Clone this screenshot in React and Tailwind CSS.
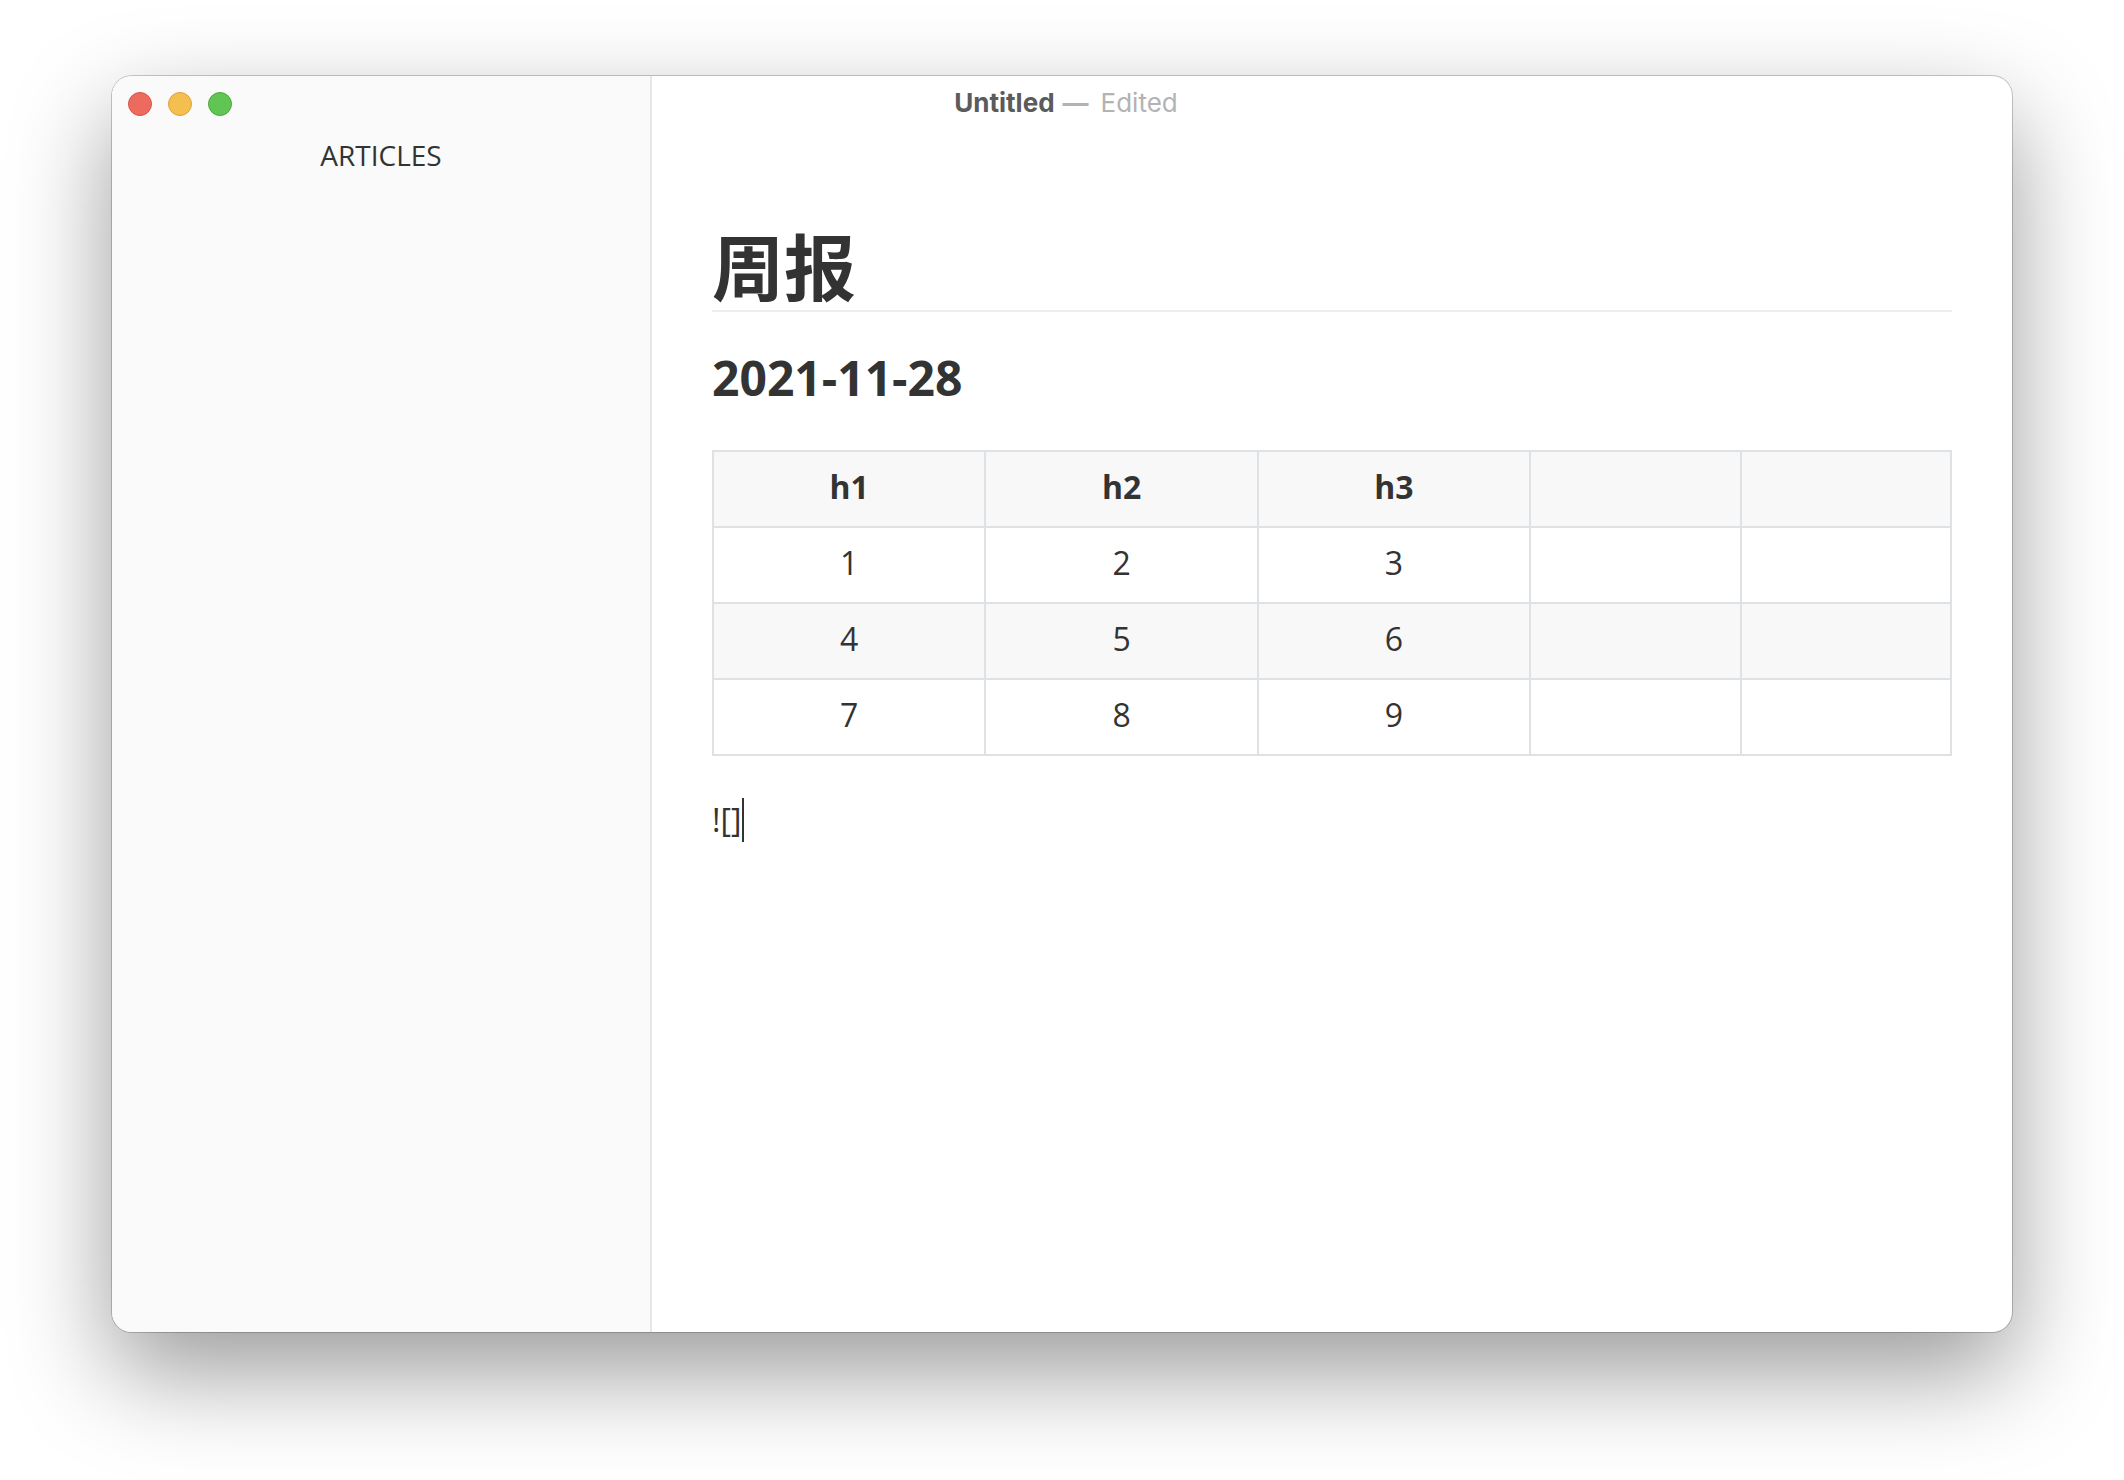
const columns = ["h1", "h2", "h3", "", ""];
const rows = [
  ["1", "2", "3", "", ""],
  ["4", "5", "6", "", ""],
  ["7", "8", "9", "", ""],
];

const cell = "h-[76px] border-2 border-[#dfe2e5] px-6 pt-1 pb-2 text-center";

function TitleBar() {
  return (
    <header className="z-10 col-span-2 col-start-1 row-start-1 grid h-14 grid-cols-[1fr_auto_1fr] items-end px-4 pb-4">
      <div className="flex gap-4">
        <button
          aria-label="Close"
          className="size-6 rounded-full border border-[#d75449] bg-[#ec6a5e]"
        />
        <button
          aria-label="Minimize"
          className="size-6 rounded-full border border-[#dca23d] bg-[#f4bf4f]"
        />
        <button
          aria-label="Zoom"
          className="size-6 rounded-full border border-[#4ca93b] bg-[#61c554]"
        />
      </div>
      <div className="flex items-center gap-2 pb-px pl-2 font-['Inter',sans-serif] text-[26px] leading-6">
        <span className="font-bold text-[#5b5b5b]">Untitled</span>
        <span className="font-bold text-[#b3b3b3]">—</span>
        <span className="pl-1 text-[#b3b3b3]">Edited</span>
      </div>
    </header>
  );
}

function Sidebar() {
  return (
    <aside className="col-start-1 row-span-2 row-start-1 border-r-2 border-[#e7e7e7] bg-[#fafafa] pt-[59px] text-center">
      <h2 className="text-[28px] leading-10">ARTICLES</h2>
    </aside>
  );
}

function Editor() {
  return (
    <main className="col-start-2 row-start-2 px-[60px] pt-[92px] text-[32px] leading-[52px]">
      <h1 className="border-b-2 border-[#eeeeee] text-[72px] leading-[86px] font-bold">
        周报
      </h1>
      <h3 className="pt-8 text-[48px] leading-[68px] font-bold">2021-11-28</h3>
      <table className="mt-[38px] w-full table-fixed border-collapse">
        <colgroup>
          <col className="w-[22%]" />
          <col className="w-[22%]" />
          <col className="w-[22%]" />
          <col className="w-[17%]" />
          <col className="w-[17%]" />
        </colgroup>
        <thead>
          <tr className="bg-[#f8f8f8]">
            {columns.map((label, i) => (
              <th key={i} scope="col" className={`${cell} font-bold`}>
                {label}
              </th>
            ))}
          </tr>
        </thead>
        <tbody>
          {rows.map((row, r) => (
            <tr key={r} className="bg-white even:bg-[#f8f8f8]">
              {row.map((value, i) => (
                <td key={i} className={cell}>
                  {value}
                </td>
              ))}
            </tr>
          ))}
        </tbody>
      </table>
      <div
        role="textbox"
        aria-label="Paragraph"
        contentEditable
        suppressContentEditableWarning
        className="mt-[38px] flex items-center gap-px outline-none"
      >
        <span>![]</span>
        <span className="h-11 w-[2px] bg-[#333333]" />
      </div>
    </main>
  );
}

export default function App() {
  return (
    <div className="flex min-h-screen flex-col bg-white px-28 pt-[76px] pb-[148px] font-['Open_Sans','Noto_Sans_CJK_SC',sans-serif] text-[#333333]">
      <div className="grid flex-1 grid-cols-[540px_1fr] grid-rows-[auto_1fr] rounded-[20px] bg-white shadow-[0_0_0_1px_rgba(0,0,0,0.2),0_40px_100px_rgba(0,0,0,0.4)] *:first:rounded-l-[20px]">
        <Sidebar />
        <TitleBar />
        <Editor />
      </div>
    </div>
  );
}
